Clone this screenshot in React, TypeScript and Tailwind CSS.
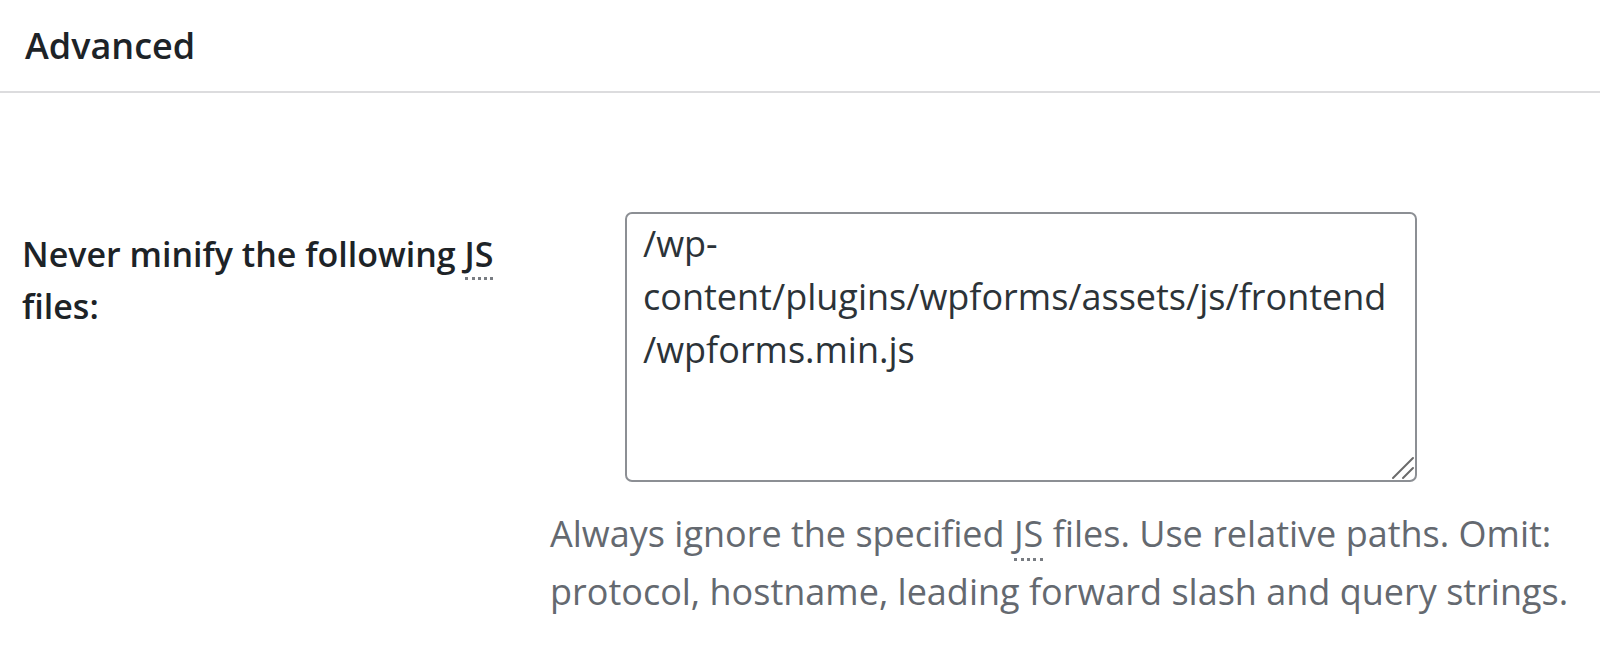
import { useState } from "react";

const font = { fontFamily: '"Open Sans", "Noto Sans", sans-serif' };

function Abbr({ children }: { children: string }) {
  return (
    <abbr
      title="JavaScript"
      className="no-underline border-b-[3px] border-dotted border-[#787c82]"
    >
      {children}
    </abbr>
  );
}

export default function App() {
  const [value, setValue] = useState(
    "/wp-\ncontent/plugins/wpforms/assets/js/frontend\n/wpforms.min.js"
  );

  return (
    <div className="min-h-screen bg-white" style={font}>
      <div className="flex h-[93px] items-center border-b-2 border-[#dcdcde] pl-[25px]">
        <h2 className="text-[36px] font-semibold leading-none text-[#1d2327]">Advanced</h2>
      </div>

      <div className="pt-[119px]">
        <div className="flex">
          <div className="w-[625px] shrink-0 pl-[22px] pr-[70px] pt-[16px]">
            <label className="block text-[34px] font-semibold leading-[52px] text-[#1d2327]">
              Never minify the following <Abbr>JS</Abbr> files:
            </label>
          </div>
          <div className="relative">
            <textarea
              value={value}
              onChange={(e) => setValue(e.target.value)}
              spellCheck={false}
              className="block h-[270px] w-[792px] resize-none rounded-[7px] border-2 border-[#8c8f94] bg-white pl-[16px] pr-[16px] pt-[3px] text-[36px] leading-[53px] text-[#2c3338] outline-none"
              style={font}
            />
            <svg
              className="pointer-events-none absolute bottom-0 right-0"
              width="26"
              height="26"
              viewBox="0 0 26 26"
            >
              <path d="M2 22 L22 2 M12 22 L22 12" stroke="#6b6b6b" strokeWidth="2" strokeLinecap="round" />
            </svg>
          </div>
        </div>

        <p className="ml-[550px] mt-[23px] text-[36px] leading-[58px] text-[#646970]">
          Always ignore the specified <Abbr>JS</Abbr> files. Use relative paths. Omit:
          <br />
          protocol, hostname, leading forward slash and query strings.
        </p>
      </div>
    </div>
  );
}
